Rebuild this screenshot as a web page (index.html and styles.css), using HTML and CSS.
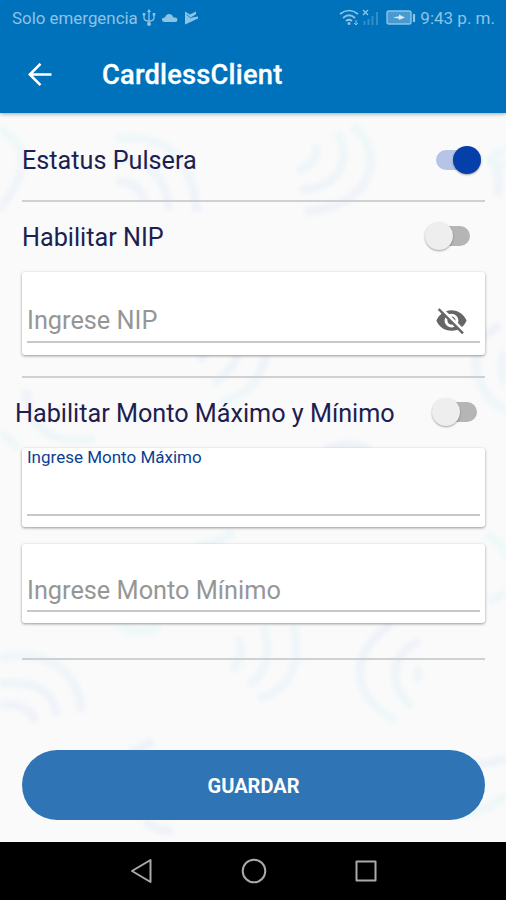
FILE: index.html
```html
<!DOCTYPE html>
<html lang="es">
<head>
<meta charset="utf-8">
<title>CardlessClient</title>
<link rel="stylesheet" href="styles.css">
</head>
<body>
<div class="screen">
  <header class="header">
    <div class="status">
      <span class="carrier">Solo emergencia</span>
      <svg class="left-icons" width="58" height="20" viewBox="0 0 58 20" fill="none" stroke="currentColor" stroke-width="1.3">
        <path d="M8 2v15M3 6v4q0 3 5 3t5-3V6"/><path d="M8 1l2 3H6zM1.7 5h2.6v2.6H1.7zM11.7 5h2.6v2.6h-2.6z" fill="currentColor" stroke="none"/><circle cx="8" cy="16" r="2" fill="currentColor" stroke="none"/>
        <path d="M23.500 14q-2.500 0-2.500-2.200T24 9.500q1-3.500 4-3.500t4.200 3.200q4.300.3 4.300 2.600T34 14z" fill="currentColor" stroke="none"/>
        <path d="M44 3.500l5 3 6-3v3l-4.500 3 6.500-1v2L44 16.500z" fill="currentColor" stroke="none"/><path d="M45.500 6.500l4 3.500 6-3.500" stroke="#0072bc" stroke-width=".8"/>
      </svg>
      <svg class="right-icons" width="78" height="20" viewBox="0 0 78 20" fill="none" stroke="currentColor">
        <path d="M1 6q9-7 18 0M4 10q6-5.500 12 0M7 13q3-2.500 6 0" stroke-width="1.700"/><circle cx="10" cy="15.500" r="1.500" fill="currentColor" stroke="none"/><path d="M17 12v5M15 15l2 2 2-2" stroke-width="1"/>
        <path d="M24 2l5 5M29 2l-5 5" stroke-width="1.400"/>
        <path d="M25.500 13v4M29.500 11v6M33.500 8v9M38 4v13" stroke-width="2" opacity=".35"/>
        <rect x="48" y="3" width="24" height="13" rx="2" fill="currentColor" fill-opacity=".5" stroke-width="1.400"/><path d="M75 6v8" stroke-width="2.200"/><path d="M54 9.500l6-1.200V6.500l6 3-6 2.500v-1.300z" fill="#d2e8f6" stroke="none"/>
      </svg>
      <span class="clock">9:43 p. m.</span>
    </div>
    <div class="appbar">
      <svg width="24" height="24" viewBox="0 0 24 24" fill="none" stroke="#fff" stroke-width="2.600"><path d="M23.500 11.500H2.500M12.500.8L1.800 11.500l10.700 10.700"/></svg>
      <h1 class="title">CardlessClient</h1>
    </div>
  </header>
  <main class="content">
    <svg class="waves" viewBox="0 113 506 729" fill="none" stroke="url(#wave)" stroke-width="9" aria-hidden="true">
      <defs>
        <linearGradient id="wave" x1="0" y1="0" x2="0" y2="1"><stop offset="0" stop-color="#e7f7f8"/><stop offset="1" stop-color="#e9edf8"/></linearGradient>
        <linearGradient id="wave-up" x1="0" y1="0" x2="0" y2="1"><stop offset="0" stop-color="#e8ecf8"/><stop offset="1" stop-color="#e7f6f8"/></linearGradient>
      </defs>
      <path d="M-10 125Q52 150-5 213M115 139Q189 129 197 212M112 160Q163 155 169 210M116 181Q142 182 144 202"/>
      <path d="M352 125C391 157 367 209 305 211M337 132C352 159 341 188 299 190M317 145Q317 165 297 171"/>
      <path d="M505 166C480 165 494 153 506 150M493 168Q503 177 497 196"/>
      <g stroke="url(#wave-up)">
        <path d="M266 350C263 383 242 399 220 401M239 350Q235 369 213 384M206 350l-5 12"/>
        <path d="M500 326C464 339 470 394 506 410M506 352Q497 365 506 385"/>
        <path d="M-5 430Q8 437 18 449M27 390C25 427 56 448 95 438"/>
        <path d="M233 532Q218 545 196 546M325 450Q348 440 370 450"/>
        <path d="M391 624C347 654 350 698 397 721M420 641C390 653 387 684 412 707M420 667q-5 7 0 14"/>
        <path d="M153 740q-13 10-24 12M506 758Q481 768 460 761M506 795q-25 21-48 18"/>
      </g>
      <path d="M-5 659C46 647 79 669 81 712M-5 684C40 678 54 695 57 716M-5 706Q29 700 35 722M119 626Q139 637 160 626"/>
      <path d="M293 626C303 660 291 690 258 699M264 626C272 655 264 678 248 684M237 637Q247 652 232 671M486 535Q505 542 506 558M489 601l20-10M145 822q12 9 28 9"/>
    </svg>
    <section class="row row-status"><span>Estatus Pulsera</span><span class="switch on"></span></section>
    <hr class="divider">
    <section class="row row-pin"><span>Habilitar NIP</span><span class="switch"></span></section>
    <div class="card card-pin">
      <div class="field"><span class="hint">Ingrese NIP</span>
        <svg class="eye" width="33" height="33" viewBox="0 0 24 24" fill="#666"><path d="M12 7c2.760 0 5 2.240 5 5 0 .65-.13 1.260-.36 1.830l2.920 2.920c1.510-1.260 2.700-2.890 3.430-4.750-1.730-4.390-6-7.500-11-7.500-1.400 0-2.740.25-3.980.7l2.160 2.160C10.740 7.130 11.350 7 12 7zM2 4.270l2.280 2.280.46.46C3.080 8.300 1.780 10.020 1 12c1.730 4.390 6 7.500 11 7.500 1.550 0 3.030-.3 4.380-.84l.42.42L19.730 22 21 20.730 3.270 3 2 4.270zM7.530 9.800l1.550 1.550c-.05.21-.08.43-.08.65 0 1.660 1.340 3 3 3 .22 0 .44-.03.65-.08l1.550 1.550c-.67.33-1.410.53-2.200.53-2.760 0-5-2.240-5-5 0-.79.2-1.530.53-2.200zm4.310-.78l3.150 3.150.02-.16c0-1.660-1.340-3-3-3l-.17.01z"/></svg>
      </div>
    </div>
    <hr class="divider">
    <section class="row row-amount"><span>Habilitar Monto Máximo y Mínimo</span><span class="switch"></span></section>
    <div class="card card-max"><div class="field"><span class="label">Ingrese Monto Máximo</span></div></div>
    <div class="card card-min"><div class="field"><span class="hint">Ingrese Monto Mínimo</span></div></div>
    <hr class="divider">
    <button class="save">GUARDAR</button>
  </main>
  <nav class="navbar">
    <svg width="24" height="26" viewBox="0 0 24 26"><path d="M20.500 2v22L2 13z"/></svg>
    <svg width="26" height="26" viewBox="0 0 26 26"><circle cx="13" cy="13" r="11.300"/></svg>
    <svg width="24" height="24" viewBox="0 0 24 24"><path d="M2.500 2.500h19v19h-19z"/></svg>
  </nav>
</div>
</body>
</html>
```

FILE: styles.css
```css
* { box-sizing: border-box; }
body { margin: 0; font-family: Roboto, "Liberation Sans", sans-serif; }
.screen { width: 506px; height: 900px; display: flex; flex-direction: column; overflow: hidden; background: #fafafa; }
.header { height: 113px; background: #0072bc; color: #fff; box-shadow: 0 1px 4px rgba(0,0,0,.35); z-index: 1; flex: none; }
.status { height: 36px; display: flex; align-items: center; padding: 0 11px 0 12px; font-size: 17px; color: #8dc3e5; white-space: nowrap; }
.carrier { font-size: 16.9px; width: 126px; }
.left-icons { margin-left: 3px; }
.right-icons { margin-left: auto; margin-right: 3px; }
.appbar { height: 77px; display: flex; align-items: center; padding: 0 28px 0 28px; gap: 50px; }
.title { margin: 0; font-size: 27.3px; font-weight: 500; line-height: 34px; letter-spacing: .2px; -webkit-text-stroke: .3px #fff; }
.content { flex: 1; position: relative; padding: 0 21px 0 22px; isolation: isolate; }
.waves { position: absolute; inset: 0; width: 100%; height: 100%; z-index: -1; filter: blur(2px); opacity: .6; }
.divider { margin: 0; height: 2px; border: 0; background: #cfd0d1; }
.row { display: flex; align-items: center; justify-content: space-between; color: #1c2050; font-size: 25.2px; line-height: 30px; white-space: nowrap; }
.row > span:first-child { position: relative; top: 1px; }
.row-status { height: 87px; padding: 7px 4px 0 0; }
.row-pin { height: 70px; padding: 0 15px 2px 0; }
.row-amount { height: 70px; margin-left: -7px; padding: 0 8px 2px 0; }
.row-pin > span:first-child, .row-amount > span:first-child { top: 2px; }
.switch { width: 45px; height: 28px; display: flex; align-items: center; position: relative; }
.switch::before { content: ""; width: 36px; height: 20px; margin-left: auto; border-radius: 10px; background: #b5b5b5; }
.switch::after { content: ""; position: absolute; left: 0; top: 0; width: 28px; height: 28px; border-radius: 50%; background: #eee; box-shadow: 0 1px 2px rgba(0,0,0,.35); }
.switch.on::before { margin: 0; background: #b5c4e7; }
.switch.on::after { left: auto; right: 0; background: #053faa; }
.card { background: #fff; border-radius: 3px; box-shadow: 0 1px 3px rgba(0,0,0,.4); padding: 0 5px; }
.card-pin { height: 83px; margin-bottom: 21px; }
.card-max { height: 79px; margin-bottom: 17px; }
.card-min { height: 79px; margin-bottom: 35px; }
.field { display: flex; justify-content: space-between; border-bottom: 2px solid #c7c7c7; }
.card-pin .field { height: 71px; }
.card-max .field, .card-min .field { height: 68px; }
.hint { align-self: flex-end; font-size: 25.3px; line-height: 30px; color: #969696; padding-bottom: 5px; }
.card-min .hint { padding-bottom: 4px; }
.eye { align-self: flex-end; margin: 0 12px 4px 0; }
.label { font-size: 17px; line-height: 18px; color: #0b3f91; }
.save { display: block; width: 463px; height: 70px; margin-top: 90px; padding: 2px 0 0; border: 0; border-radius: 35px; background: #2f74b5; color: #fff; font: 700 20px Roboto, "Liberation Sans", sans-serif; }
.navbar { height: 58px; flex: none; background: #000; display: flex; align-items: center; gap: 87px; padding-left: 130px; }
.navbar svg { fill: none; stroke: #aaa; stroke-width: 2; stroke-linejoin: round; }
```
